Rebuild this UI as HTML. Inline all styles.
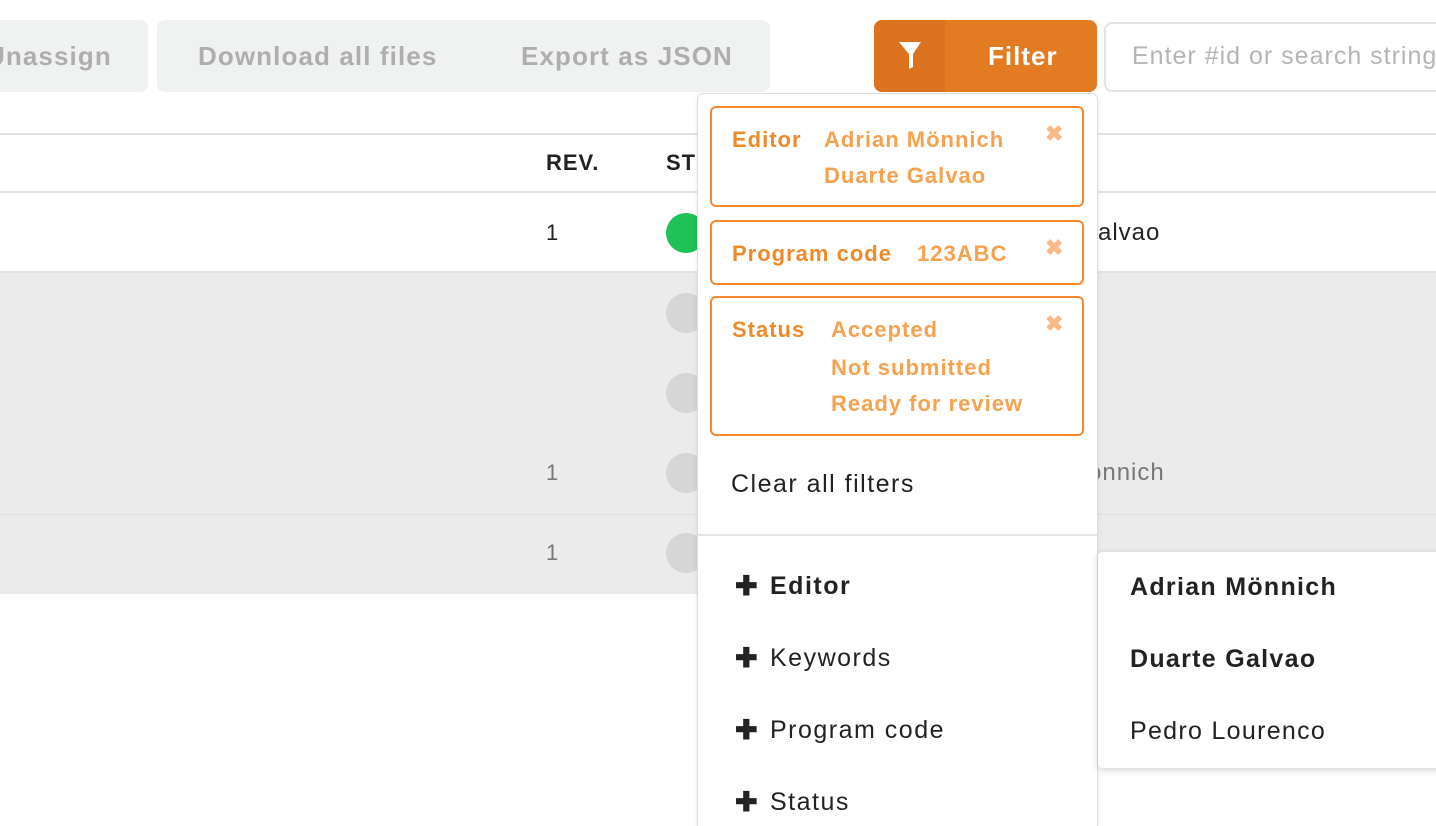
<!DOCTYPE html>
<html style="overflow:hidden;height:826px"><head><meta charset="utf-8"><style>
*{box-sizing:border-box;margin:0;padding:0}
body{width:1436px;height:826px;overflow:hidden;background:#fff;font-family:"Liberation Sans",sans-serif;position:relative;color:#222;letter-spacing:1px}
.a{position:absolute}
.btn{position:absolute;background:#f0f1f1;border-radius:8px;top:20px;height:72px;color:#aeaeae;font-weight:bold;font-size:26px;line-height:72px;white-space:nowrap;letter-spacing:1.1px}
.t{position:absolute;white-space:nowrap;line-height:1}
.chip{position:absolute;left:710px;width:374px;border:2px solid #f7882f;border-radius:6px}
.lab{color:#ef8a2a;font-weight:bold;font-size:22px}
.val{color:#f7a24e;font-weight:bold;font-size:22px}
.x{color:#f9b98a;font-weight:bold;font-size:22px}
.circ{position:absolute;left:666px;width:40px;height:40px;border-radius:50%;background:#d6d6d6}
.it{position:absolute;left:735px;font-size:25px;line-height:1;white-space:nowrap;letter-spacing:1.5px}
.plus{display:inline-block;width:22px;font-weight:bold;font-size:27px;vertical-align:-1px}
</style></head><body>
<div class="btn" style="left:-20px;width:168px"><span style="position:absolute;left:6px">Unassign</span></div>
<div class="btn" style="left:157px;width:613px"><span style="position:absolute;left:41px">Download all files</span><span style="position:absolute;left:364px">Export as JSON</span></div>
<div class="a" style="left:874px;top:20px;width:223px;height:72px;background:#e27b22;border-radius:8px;overflow:hidden">
<div class="a" style="left:0;top:0;width:71px;height:72px;background:#da7220"></div>
<svg class="a" style="left:22px;top:20px" width="28" height="30" viewBox="0 0 28 30"><path d="M3 2h22l-8 12v13l-4 2V14z" fill="#fff"/></svg>
<div class="t" style="left:114px;top:23px;color:#fff;font-weight:bold;font-size:26px">Filter</div>
</div>
<div class="a" style="left:1104px;top:22px;width:340px;height:70px;border:2px solid #e4e4e4;border-radius:8px"></div>
<div class="t" style="left:1132px;top:44px;color:#b5b5b5;font-size:25px">Enter #id or search string</div>

<div class="a" style="left:0;top:133px;width:1436px;height:2px;background:#e2e2e2"></div>
<div class="t" style="left:546px;top:152px;font-weight:bold;font-size:22px">REV.</div>
<div class="t" style="left:666px;top:152px;font-weight:bold;font-size:22px">ST</div>
<div class="a" style="left:0;top:191px;width:1436px;height:2px;background:#e2e2e2"></div>
<div class="t" style="left:546px;top:222px;font-size:22px">1</div>
<div class="circ" style="top:213px;background:#1fc257"></div>
<div class="t" style="left:1098px;top:221px;font-size:24px">alvao</div>
<div class="a" style="left:0;top:271px;width:1436px;height:2px;background:#e2e2e2"></div>
<div class="a" style="left:0;top:273px;width:1436px;height:321px;background:#ebebeb"></div>
<div class="a" style="left:0;top:514px;width:1436px;height:1px;background:#e0e0e0"></div>
<div class="circ" style="top:293px"></div>
<div class="circ" style="top:373px"></div>
<div class="circ" style="top:453px"></div>
<div class="circ" style="top:533px"></div>
<div class="t" style="left:546px;top:462px;font-size:22px;color:#777">1</div>
<div class="t" style="left:546px;top:542px;font-size:22px;color:#777">1</div>
<div class="t" style="left:1088px;top:461px;font-size:24px;color:#777">önnich</div>

<div class="a" style="left:697px;top:93px;width:401px;height:733px;background:#fff;border:1px solid #ddd;border-bottom:none;border-radius:6px 6px 0 0;box-shadow:0 2px 6px rgba(0,0,0,.08)"></div>
<div class="chip" style="top:106px;height:101px"></div>
<div class="t lab" style="left:732px;top:129px">Editor</div>
<div class="t val" style="left:824px;top:129px">Adrian Mönnich</div>
<div class="t val" style="left:824px;top:165px">Duarte Galvao</div>
<div class="t x" style="left:1045px;top:123px">✖</div>
<div class="chip" style="top:220px;height:65px"></div>
<div class="t lab" style="left:732px;top:243px">Program code</div>
<div class="t val" style="left:917px;top:243px">123ABC</div>
<div class="t x" style="left:1045px;top:237px">✖</div>
<div class="chip" style="top:296px;height:140px"></div>
<div class="t lab" style="left:732px;top:319px">Status</div>
<div class="t val" style="left:831px;top:319px">Accepted</div>
<div class="t val" style="left:831px;top:357px">Not submitted</div>
<div class="t val" style="left:831px;top:393px">Ready for review</div>
<div class="t x" style="left:1045px;top:313px">✖</div>
<div class="t" style="left:731px;top:472px;font-size:25px;letter-spacing:1.5px">Clear all filters</div>
<div class="a" style="left:698px;top:534px;width:399px;height:2px;background:#e6e6e6"></div>
<div class="it" style="top:573px;font-weight:bold"><span class="plus">✚</span><span style="margin-left:13px">Editor</span></div>
<div class="it" style="top:645px"><span class="plus">✚</span><span style="margin-left:13px">Keywords</span></div>
<div class="it" style="top:717px"><span class="plus">✚</span><span style="margin-left:13px">Program code</span></div>
<div class="it" style="top:789px"><span class="plus">✚</span><span style="margin-left:13px">Status</span></div>

<div class="a" style="left:1098px;top:552px;width:350px;height:216px;background:#fff;border-radius:4px;box-shadow:0 2px 8px rgba(0,0,0,.18)"></div>
<div class="t" style="left:1130px;top:575px;font-size:25px;font-weight:bold;letter-spacing:1.3px">Adrian Mönnich</div>
<div class="t" style="left:1130px;top:647px;font-size:25px;font-weight:bold;letter-spacing:1.3px">Duarte Galvao</div>
<div class="t" style="left:1130px;top:719px;font-size:25px;letter-spacing:1.3px">Pedro Lourenco</div>
</body></html>
